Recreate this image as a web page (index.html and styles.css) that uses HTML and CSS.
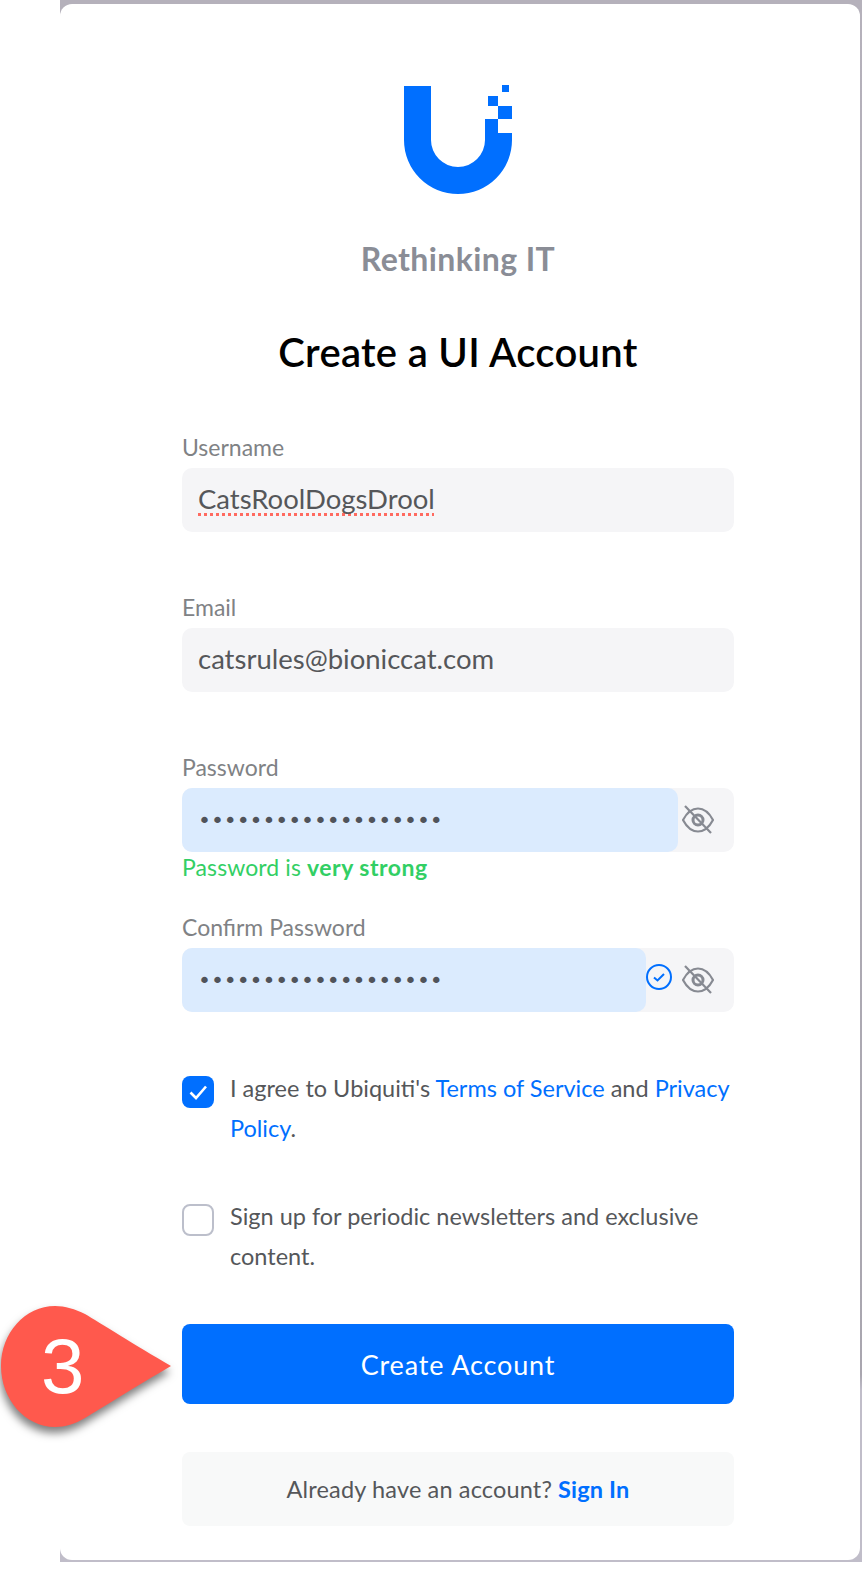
FILE: index.html
```html
<!DOCTYPE html>
<html lang="en">
<head>
    <meta charset="UTF-8">
    <meta name="viewport" content="width=device-width, initial-scale=1.0">
    <title>Create a UI Account</title>
    <link rel="stylesheet" href="styles.css">
</head>
<body>
    <div class="backdrop">
        <div class="card">
            <svg class="logo" viewBox="0 0 108 109" width="108" height="109" aria-label="Ubiquiti">
                <path d="M0 1H27V55a27 27 0 0 0 54 0V34H94V48H108V55A54 54 0 0 1 0 55Z"/>
                <rect x="98" y="0" width="7" height="7"/>
                <rect x="84" y="11" width="10" height="10"/>
                <rect x="94" y="21" width="14" height="13"/>
            </svg>
            <p class="tagline">Rethinking IT</p>
            <h1>Create a UI Account</h1>

            <form>
                <div class="form-group">
                    <label>Username</label>
                    <div class="field"><span class="value misspelled">CatsRoolDogsDrool</span></div>
                </div>
                <div class="form-group">
                    <label>Email</label>
                    <div class="field"><span class="value">catsrules@bioniccat.com</span></div>
                </div>
                <div class="form-group form-group-hint">
                    <label>Password</label>
                    <div class="field">
                        <div class="filled filled-long"><span class="dots">&#8226;&#8226;&#8226;&#8226;&#8226;&#8226;&#8226;&#8226;&#8226;&#8226;&#8226;&#8226;&#8226;&#8226;&#8226;&#8226;&#8226;&#8226;&#8226;</span></div>
                        <svg class="eye" viewBox="0 0 32 32" width="32" height="32">
                            <path d="M1 16C5 8.5 10 4.5 16 4.5S27 8.5 31 16C27 23.5 22 27.5 16 27.5S5 23.5 1 16Z"/>
                            <circle class="iris" cx="16" cy="16" r="5"/>
                            <path d="M3 2L29 29"/>
                        </svg>
                    </div>
                    <p class="hint">Password is <b>very strong</b></p>
                </div>
                <div class="form-group form-group-last">
                    <label>Confirm Password</label>
                    <div class="field">
                        <div class="filled filled-short"><span class="dots">&#8226;&#8226;&#8226;&#8226;&#8226;&#8226;&#8226;&#8226;&#8226;&#8226;&#8226;&#8226;&#8226;&#8226;&#8226;&#8226;&#8226;&#8226;&#8226;</span></div>
                        <svg class="match" viewBox="0 0 26 26" width="26" height="26">
                            <circle cx="13" cy="13" r="12"/>
                            <path d="M8 13.5L11.5 16.5L18 10"/>
                        </svg>
                        <svg class="eye" viewBox="0 0 32 32" width="32" height="32">
                            <path d="M1 16C5 8.5 10 4.5 16 4.5S27 8.5 31 16C27 23.5 22 27.5 16 27.5S5 23.5 1 16Z"/>
                            <circle class="iris" cx="16" cy="16" r="5"/>
                            <path d="M3 2L29 29"/>
                        </svg>
                    </div>
                </div>

                <div class="check-row">
                    <span class="box box-on">
                        <svg viewBox="0 0 32 32" width="32" height="32"><path d="M8.5 16.5L14 22L24 10.5"/></svg>
                    </span>
                    <p>I agree to Ubiquiti's <a href="#">Terms of Service</a> and <a href="#">Privacy</a> <a href="#">Policy</a>.</p>
                </div>
                <div class="check-row check-row-last">
                    <span class="box"></span>
                    <p>Sign up for periodic newsletters and exclusive content.</p>
                </div>

                <button type="button">Create Account</button>
            </form>

            <div class="signin">Already have an account? <a href="#">Sign In</a></div>
        </div>
    </div>

    <div class="callout">
        <svg viewBox="0 0 172 124" width="172" height="124">
            <path d="M171 61C135 40 100 18 85 9C75 4 65 1 55 1C25 1 1 28 1 61C1 94 25 122 55 122C65 122 75 119 85 113C100 104 135 82 171 61Z"/>
        </svg>
        <span>3</span>
    </div>
</body>
</html>
```

FILE: styles.css
```css
* {
    margin: 0;
    padding: 0;
    box-sizing: border-box;
}

body {
    background: white;
    font-family: Lato, "Open Sans", sans-serif;
    height: 1572px;
    overflow: hidden;
    position: relative;
}

.backdrop {
    margin-left: 60px;
    height: 1562px;
    padding: 4px 2px 2px 0;
    background: linear-gradient(to bottom, #b5b1bb 0, #a9a6af 88%, #c0bdc9 89%, #c0bdc9 100%);
}

.card {
    height: 1556px;
    background: white;
    border-radius: 12px;
    padding: 81px 126px 0 122px;
    display: flex;
    flex-direction: column;
    align-items: center;
}

.logo {
    fill: #006fff;
    flex: none;
}

.tagline {
    margin-top: 41px;
    font-size: 32px;
    line-height: 48px;
    font-weight: 700;
    letter-spacing: 0.4px;
    color: #8a8d96;
}

h1 {
    margin-top: 41px;
    font-size: 40px;
    line-height: 56px;
    font-weight: 600;
    letter-spacing: 0.3px;
    color: #000;
}

form {
    width: 100%;
    margin-top: 52px;
}

.form-group {
    margin-bottom: 60px;
}

.form-group-hint {
    margin-bottom: 30px;
}

.form-group-last {
    margin-bottom: 58px;
}

label {
    display: block;
    font-size: 23px;
    line-height: 30px;
    color: #808285;
    margin-bottom: 6px;
}

.field {
    height: 64px;
    background: #f5f5f7;
    border-radius: 10px;
    display: flex;
    align-items: center;
    padding-left: 16px;
    position: relative;
}

.value {
    margin-bottom: 2px;
    font-size: 27.5px;
    line-height: 34px;
    color: #55575a;
}

.misspelled {
    text-decoration: underline dotted #ff6a60 3px;
    text-decoration-skip-ink: none;
    text-underline-offset: 4px;
}

.filled {
    align-self: stretch;
    margin-left: -16px;
    background: #dbebfe;
    border-radius: 10px;
    display: flex;
    align-items: center;
    padding-left: 16px;
}

.filled-long {
    width: 496px;
}

.filled-short {
    width: 464px;
}

.dots {
    font-family: "DejaVu Sans", sans-serif;
    font-size: 22px;
    letter-spacing: -0.1px;
    color: #50535a;
}

.eye {
    fill: none;
    stroke: #878a92;
    stroke-width: 2.2;
    margin-left: auto;
    margin-right: 20px;
}

.eye .iris {
    stroke-width: 3;
}

.match {
    fill: none;
    stroke: #006fff;
    stroke-width: 2;
    margin-bottom: 7px;
}

.match + .eye {
    margin-left: 10px;
}

.hint {
    font-size: 23px;
    line-height: 30px;
    letter-spacing: 0.1px;
    color: #32cf64;
}

.hint b {
    font-weight: 700;
    letter-spacing: 0.5px;
}

.check-row {
    display: flex;
    gap: 16px;
    margin-bottom: 50px;
}

.check-row-last {
    margin-bottom: 48px;
}

.check-row p {
    flex: 1;
    margin-top: -2px;
    font-size: 23.5px;
    line-height: 40px;
    color: #55575a;
}

.check-row a {
    color: #006fff;
    text-decoration: none;
}

.box {
    flex: none;
    width: 32px;
    height: 32px;
    margin-top: 6px;
    border-radius: 8px;
    border: 2px solid #bcbfcb;
    background: white;
}

.box-on {
    border: 0;
    background: #006fff;
}

.box svg {
    display: block;
    fill: none;
    stroke: white;
    stroke-width: 2.6;
}

button {
    display: block;
    width: 100%;
    height: 80px;
    background: #006fff;
    color: white;
    border: none;
    border-radius: 8px;
    font-family: inherit;
    font-size: 27px;
    letter-spacing: 0.85px;
    cursor: pointer;
}

.signin {
    width: 100%;
    height: 74px;
    margin-top: 48px;
    background: #f8f9f9;
    border-radius: 8px;
    display: flex;
    align-items: center;
    justify-content: center;
    gap: 6px;
    font-size: 23.5px;
    letter-spacing: 0.15px;
    color: #55575a;
}

.signin a {
    color: #006fff;
    font-weight: 700;
    text-decoration: none;
}

.callout {
    position: absolute;
    left: 0;
    top: 1305px;
    width: 172px;
    height: 124px;
}

.callout svg {
    display: block;
    fill: #ff594d;
    filter: drop-shadow(-1px 6px 4px rgba(0, 0, 0, 0.5));
    overflow: visible;
}

.callout span {
    position: absolute;
    left: 41px;
    top: 17px;
    font-family: "Liberation Sans", sans-serif;
    font-size: 78px;
    line-height: 88px;
    color: white;
}
```
